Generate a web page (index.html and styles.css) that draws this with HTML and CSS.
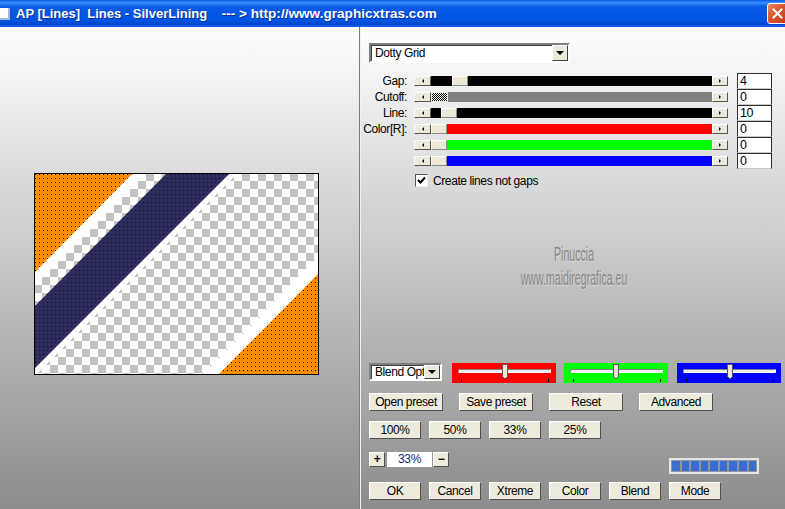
FILE: index.html
```html
<!DOCTYPE html>
<html lang="en">
<head>
    <meta charset="UTF-8">
    <title>AP [Lines] Lines - SilverLining</title>
    <link rel="stylesheet" href="styles.css">
</head>
<body>
<div class="window">
    <!-- Barra de titulo -->
    <div class="titlebar">
        <span class="app-icon"></span>
        <span class="title">AP [Lines]  Lines - SilverLining    <span class="url">--- &gt; http://www.graphicxtras.com</span></span>
        <span class="close">
            <svg width="11" height="11" viewBox="0 0 11 11"><path d="M1.5 1.5 L9.5 9.5 M9.5 1.5 L1.5 9.5" stroke="#fff" stroke-width="2" stroke-linecap="square"/></svg>
        </span>
    </div>

    <div class="main">
        <!-- Vista previa -->
        <div class="preview-pane">
            <svg class="preview" width="285" height="202" viewBox="0 0 285 202">
                <defs>
                    <pattern id="chk" width="16" height="16" patternUnits="userSpaceOnUse">
                        <rect width="16" height="16" fill="#fff"/>
                        <rect width="8" height="8" fill="#c3c3c3"/>
                        <rect x="8" y="8" width="8" height="8" fill="#c3c3c3"/>
                    </pattern>
                    <pattern id="dots" width="4" height="4" patternUnits="userSpaceOnUse">
                        <rect x="1" y="1" width="1" height="1" fill="#000"/>
                    </pattern>
                    <clipPath id="inside"><rect x="1" y="1" width="283" height="200"/></clipPath>
                </defs>
                <g clip-path="url(#inside)">
                    <rect width="285" height="202" fill="url(#chk)"/>
                    <polygon points="99,0 112,0 0,113 0,100" fill="#fff"/>
                    <polygon points="0,0 99,0 0,100" fill="#ff8c00"/>
                    <polygon points="0,0 99,0 0,100" fill="url(#dots)"/>
                    <polygon points="196,0 204,0 0,204 0,196" fill="#fff"/>
                    <polygon points="133,0 196,0 0,196 0,134" fill="#2d2d5e"/>
                    <polygon points="133,0 196,0 0,196 0,134" fill="url(#dots)" opacity="0.7"/>
                    <polygon points="285,84 285,100 184,202 168,202" fill="#fff"/>
                    <polygon points="285,100 285,202 184,202" fill="#ff8c00"/>
                    <polygon points="285,100 285,202 184,202" fill="url(#dots)"/>
                </g>
                <rect x="0.5" y="0.5" width="284" height="201" fill="none" stroke="#000"/>
            </svg>
        </div>

        <!-- Controles -->
        <div class="controls">
            <div class="combo combo-main">
                <span class="combo-text">Dotty Grid</span>
                <span class="combo-btn"><i class="tri-down"></i></span>
            </div>

            <div class="sliders">
                <span class="s-label">Gap:</span>
                <div class="scrollbar">
                    <span class="sb-btn"><i class="tri-left"></i></span>
                    <span class="sb-track t-black"><span class="sb-thumb" style="margin-left:21px"></span></span>
                    <span class="sb-btn sb-right"><i class="tri-right"></i></span>
                </div>
                <span class="value">4</span>

                <span class="s-label">Cutoff:</span>
                <div class="scrollbar">
                    <span class="sb-btn"><i class="tri-left"></i></span>
                    <span class="sb-track t-gray"><span class="sb-thumb dither"></span></span>
                    <span class="sb-btn sb-right"><i class="tri-right"></i></span>
                </div>
                <span class="value">0</span>

                <span class="s-label">Line:</span>
                <div class="scrollbar">
                    <span class="sb-btn"><i class="tri-left"></i></span>
                    <span class="sb-track t-black"><span class="sb-thumb" style="margin-left:10px"></span></span>
                    <span class="sb-btn sb-right"><i class="tri-right"></i></span>
                </div>
                <span class="value">10</span>

                <span class="s-label">Color[R]:</span>
                <div class="scrollbar">
                    <span class="sb-btn"><i class="tri-left"></i></span>
                    <span class="sb-track t-red"><span class="sb-thumb"></span></span>
                    <span class="sb-btn sb-right"><i class="tri-right"></i></span>
                </div>
                <span class="value">0</span>

                <span class="s-label"></span>
                <div class="scrollbar">
                    <span class="sb-btn"><i class="tri-left"></i></span>
                    <span class="sb-track t-green"><span class="sb-thumb"></span></span>
                    <span class="sb-btn sb-right"><i class="tri-right"></i></span>
                </div>
                <span class="value">0</span>

                <span class="s-label"></span>
                <div class="scrollbar">
                    <span class="sb-btn"><i class="tri-left"></i></span>
                    <span class="sb-track t-blue"><span class="sb-thumb"></span></span>
                    <span class="sb-btn sb-right"><i class="tri-right"></i></span>
                </div>
                <span class="value">0</span>
            </div>

            <label class="check-row">
                <span class="checkbox">
                    <svg width="11" height="11" viewBox="0 0 11 11"><path d="M2 5 L4.5 7.5 L9 2.5" fill="none" stroke="#000" stroke-width="2"/></svg>
                </span>
                Create lines not gaps
            </label>

            <!-- Marca de agua -->
            <div class="watermark">Pinuccia<br>www.maidiregrafica.eu</div>

            <div class="bottom">
                <div class="blend-row">
                    <div class="combo combo-blend">
                        <span class="combo-text">Blend Options</span>
                        <span class="combo-btn"><i class="tri-down"></i></span>
                    </div>
                    <div class="color-slider c-red">
                        <svg width="104" height="20" viewBox="0 0 104 20">
                            <path d="M6.5 9.5 V6.5 H98.5" fill="none" stroke="#808080"/>
                            <path d="M6.5 9.5 H98.5 V6.5" fill="none" stroke="#fff"/>
                            <rect x="7" y="7" width="91" height="2" fill="#f0f0f0"/>
                            <polygon points="50.5,1.5 55.5,1.5 55.5,13.5 53,16 50.5,13.5" fill="#ece9d8" stroke="#555"/>
                            <path d="M9.5 16 V19 M96.5 16 V19" stroke="#000"/>
                        </svg>
                    </div>
                    <div class="color-slider c-green">
                        <svg width="104" height="20" viewBox="0 0 104 20">
                            <path d="M6.5 9.5 V6.5 H98.5" fill="none" stroke="#808080"/>
                            <path d="M6.5 9.5 H98.5 V6.5" fill="none" stroke="#fff"/>
                            <rect x="7" y="7" width="91" height="2" fill="#f0f0f0"/>
                            <polygon points="49.5,1.5 54.5,1.5 54.5,13.5 52,16 49.5,13.5" fill="#ece9d8" stroke="#555"/>
                            <path d="M9.5 16 V19 M96.5 16 V19" stroke="#000"/>
                        </svg>
                    </div>
                    <div class="color-slider c-blue">
                        <svg width="104" height="20" viewBox="0 0 104 20">
                            <path d="M6.5 9.5 V6.5 H98.5" fill="none" stroke="#808080"/>
                            <path d="M6.5 9.5 H98.5 V6.5" fill="none" stroke="#fff"/>
                            <rect x="7" y="7" width="91" height="2" fill="#f0f0f0"/>
                            <polygon points="50.5,1.5 55.5,1.5 55.5,13.5 53,16 50.5,13.5" fill="#ece9d8" stroke="#555"/>
                            <path d="M9.5 16 V19 M96.5 16 V19" stroke="#000"/>
                        </svg>
                    </div>
                </div>

                <div class="btn-row wide-gap">
                    <button class="btn">Open preset</button>
                    <button class="btn">Save preset</button>
                    <button class="btn">Reset</button>
                    <button class="btn">Advanced</button>
                </div>

                <div class="btn-row">
                    <button class="btn small">100%</button>
                    <button class="btn small">50%</button>
                    <button class="btn small">33%</button>
                    <button class="btn small">25%</button>
                </div>

                <div class="step-row">
                    <button class="btn step-btn">+</button>
                    <span class="step-field">33%</span>
                    <button class="btn step-btn">&minus;</button>
                    <div class="progress">
                        <i></i><i></i><i></i><i></i><i></i><i></i><i></i><i></i><i></i>
                    </div>
                </div>

                <div class="btn-row actions">
                    <button class="btn small">OK</button>
                    <button class="btn small">Cancel</button>
                    <button class="btn small">Xtreme</button>
                    <button class="btn small">Color</button>
                    <button class="btn small">Blend</button>
                    <button class="btn small">Mode</button>
                </div>
            </div>
        </div>
    </div>
</div>
</body>
</html>
```

FILE: styles.css
```css
body {
    margin: 0;
    font-family: "Liberation Sans", Arial, sans-serif;
    font-size: 12px;
    letter-spacing: -0.4px;
    color: #000;
}
.window {
    width: 785px;
    height: 509px;
    overflow: hidden;
    display: flex;
    flex-direction: column;
}

/* Barra de titulo */
.titlebar {
    height: 27px;
    flex: none;
    display: flex;
    align-items: center;
    color: #fff;
    background: linear-gradient(#0a5ae8 0%, #3b8cfb 10%, #0a5ae6 25%, #0054e2 75%, #0049cc 90%, #1a66ee 100%);
}
.app-icon {
    width: 10px;
    height: 12px;
    margin: 1px 6px 0 0;
    background: #fff;
    box-shadow: inset -2px -2px #a8b4d0;
}
.title {
    font-weight: bold;
    font-size: 13px;
    letter-spacing: 0;
    white-space: pre;
    text-shadow: 1px 1px #0b2f96;
}
.title .url {
    font-size: 13.6px;
}
.close {
    margin-left: auto;
    margin-right: -3px;
    width: 21px;
    height: 21px;
    box-sizing: border-box;
    border: 1px solid #fff;
    border-radius: 3px;
    background: linear-gradient(135deg, #ee8a68, #d9552f 45%, #c23a16);
    display: flex;
    align-items: center;
    justify-content: center;
}

.main {
    flex: 1;
    display: flex;
    background: linear-gradient(#ffffff, #8c8c8c);
}
.preview-pane {
    width: 360px;
    flex: none;
    box-sizing: border-box;
    border-right: 1px solid #7c7c7c;
    padding: 146px 0 0 34px;
}
.preview {
    display: block;
}
.controls {
    flex: 1;
    position: relative;
    display: flex;
    flex-direction: column;
    border-left: 1px solid #f2f2f2;
    padding: 16px 0 0 8px;
}

/* Listas desplegables */
.combo {
    display: flex;
    align-items: center;
    box-sizing: border-box;
    background: #fff;
    border: 2px solid;
    border-color: #7f7f7f #fff #fff #7f7f7f;
    box-shadow: inset 1px 1px #404040;
}
.combo-main {
    width: 201px;
    height: 20px;
}
.combo-blend {
    width: 73px;
    height: 18px;
    margin-right: 10px;
}
.combo-text {
    flex: 1;
    padding-left: 4px;
    overflow: hidden;
    white-space: nowrap;
}
.combo-btn {
    width: 16px;
    height: 100%;
    flex: none;
    box-sizing: border-box;
    background: #ece9d8;
    border: 1px solid;
    border-color: #fff #404040 #404040 #fff;
    display: flex;
    align-items: center;
    justify-content: center;
}
.tri-down {
    border-left: 4px solid transparent;
    border-right: 4px solid transparent;
    border-top: 4px solid #000;
}

/* Deslizadores */
.sliders {
    display: grid;
    grid-template-columns: 44px 316px 35px;
    grid-auto-rows: 16px;
    column-gap: 7px;
    align-items: center;
    margin: 10px 0 0 -6px;
}
.s-label {
    text-align: right;
    white-space: nowrap;
}
.scrollbar {
    display: flex;
    width: 314px;
    height: 10px;
}
.sb-btn {
    width: 17px;
    flex: none;
    box-sizing: border-box;
    background: #ece9d8;
    border: 1px solid;
    border-color: #fff #555 #555 #fff;
    display: flex;
    align-items: center;
    justify-content: center;
}
.sb-right {
    width: 16px;
}
.tri-left {
    border-top: 2px solid transparent;
    border-bottom: 2px solid transparent;
    border-right: 2px solid #000;
}
.tri-right {
    border-top: 2px solid transparent;
    border-bottom: 2px solid transparent;
    border-left: 2px solid #000;
}
.sb-track {
    flex: 1;
    display: flex;
}
.sb-thumb {
    width: 16px;
    box-sizing: border-box;
    background: #ece9d8;
    border: 1px solid;
    border-color: #fff #888 #888 #fff;
}
.sb-thumb.dither {
    width: 17px;
    border-color: #ece9d8;
    background: repeating-conic-gradient(#000 0 25%, #fff 0 50%) 0 0 / 2px 2px;
}
.t-black { background: #000; }
.t-gray { background: #808080; }
.t-red { background: #ff0000; }
.t-green { background: #00ff00; }
.t-blue { background: #0000ff; }
.value {
    height: 16px;
    box-sizing: border-box;
    background: #fff;
    border: 1px solid #303030;
    border-bottom-color: #c8c8c8;
    padding-left: 2px;
    line-height: 14px;
    font-size: 12.5px;
}

.check-row {
    display: flex;
    align-items: center;
    gap: 5px;
    height: 13px;
    margin: 5px 0 0 46px;
}
.checkbox {
    width: 13px;
    height: 13px;
    box-sizing: border-box;
    background: #fff;
    border: 1px solid;
    border-color: #555 #eee #eee #555;
    display: flex;
    align-items: center;
    justify-content: center;
}

.watermark {
    position: absolute;
    left: 108px;
    top: 215px;
    width: 210px;
    text-align: center;
    white-space: nowrap;
    font-size: 20px;
    line-height: 24px;
    letter-spacing: 0;
    color: #858585;
    text-shadow: 1px 1px rgba(255, 255, 255, 0.45);
    transform: scaleX(0.53);
}

/* Parte inferior */
.bottom {
    margin-top: auto;
    padding-bottom: 9px;
}
.blend-row {
    display: flex;
    align-items: flex-start;
    height: 20px;
}
.color-slider {
    width: 104px;
    height: 20px;
    margin-right: 8px;
}
.color-slider svg {
    display: block;
}
.c-red { background: #ff0000; }
.c-green { background: #00ff00; margin-right: 9px; }
.c-blue { background: #0000ff; }

.btn-row {
    display: flex;
    gap: 8px;
    margin-top: 10px;
}
.btn-row.wide-gap {
    gap: 16px;
}
.btn-row.actions {
    margin-top: 8px;
}
.btn {
    width: 74px;
    height: 18px;
    padding: 0;
    box-sizing: border-box;
    background: #eeebdc;
    border: 1px solid;
    border-color: #fff #505050 #505050 #fff;
    font-family: inherit;
    font-size: 12px;
    letter-spacing: -0.4px;
    line-height: 16px;
    color: #000;
    text-align: center;
}
.btn.small {
    width: 52px;
}

.step-row {
    display: flex;
    align-items: flex-start;
    height: 22px;
    margin-top: 13px;
}
.btn.step-btn {
    width: 16px;
    height: 15px;
    line-height: 13px;
    font-weight: bold;
}
.step-field {
    width: 45px;
    height: 15px;
    margin: 0 1px 0 2px;
    background: #fff;
    color: #1a237e;
    text-align: center;
    line-height: 15px;
}
.progress {
    width: 90px;
    height: 16px;
    box-sizing: border-box;
    margin: 6px 0 0 220px;
    border: 2px solid #e6e6e6;
    padding: 1px;
    display: flex;
    gap: 2px;
}
.progress i {
    flex: 1;
    background: #3a6ecf;
}
```
